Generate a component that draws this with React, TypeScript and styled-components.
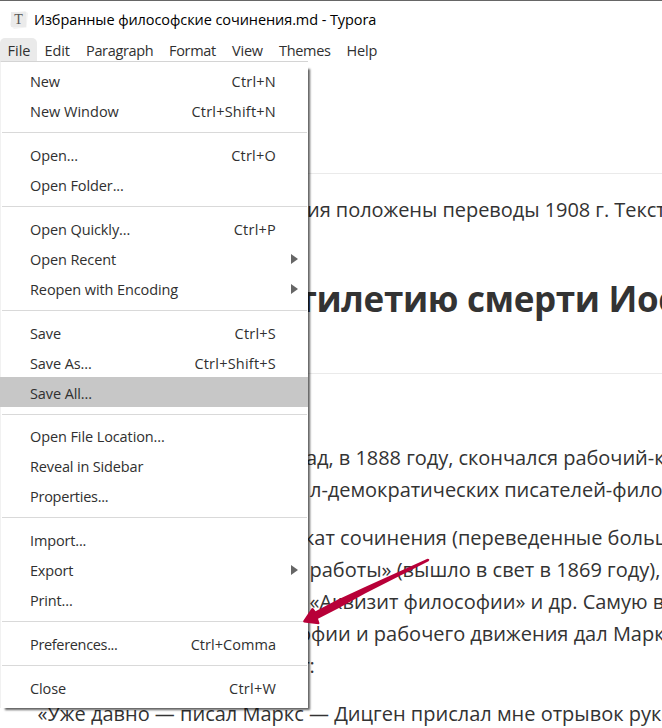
import React from 'react';
import styled, { createGlobalStyle } from 'styled-components';

const GlobalStyle = createGlobalStyle`
  *, *::before, *::after { box-sizing: border-box; }
  body { margin: 0; background: #fff; overflow: hidden; }
`;

const Window = styled.div`
  position: relative;
  width: 662px;
  height: 728px;
  overflow: hidden;
  background: #fff;
  border-top: 1px solid #666;
  font-family: 'Open Sans', 'Noto Sans', sans-serif;
  color: #333;
`;

const TitleBar = styled.header`
  display: flex;
  align-items: center;
  height: 37px;
  padding-left: 9px;
  gap: 5px;
`;

const AppIcon = styled.svg`
  width: 20px;
  height: 20px;
  font: 14px 'Liberation Serif', serif;
`;

const Title = styled.h1`
  margin: 0;
  font-size: 14.5px;
  font-weight: 400;
  line-height: 20px;
  letter-spacing: -0.08px;
  color: #000;
  white-space: nowrap;
`;

const MenuBar = styled.nav`
  display: flex;
  height: 23px;
`;

const MenuTitle = styled.div<{ $width: number; $open?: boolean; $tracking?: number }>`
  width: ${(p) => p.$width}px;
  padding: 1px 0 0 7.5px;
  border-radius: 5px 5px 0 0;
  background: ${(p) => (p.$open ? '#eaeaea' : 'transparent')};
  font-size: 14.5px;
  line-height: 23px;
  letter-spacing: ${(p) => p.$tracking ?? 0}px;
  color: #303030;
  white-space: nowrap;
`;

const Dropdown = styled.div`
  position: absolute;
  top: 60px;
  left: 0;
  width: 308px;
  height: 647px;
  padding-top: 3px;
  background: #fff;
  border-top: 1px solid #d4d4d4;
  border-left: 1px solid #f1f1f1;
`;

const Shadow = styled.div`
  position: absolute;
  top: 68px;
  left: 5px;
  width: 303px;
  height: 639px;
  box-shadow: 1px 1px 2px 1px rgba(0, 0, 0, 0.62);
`;

const MenuRow = styled.div<{ $active?: boolean }>`
  display: flex;
  align-items: center;
  height: 30px;
  margin-left: -1px;
  padding: 3px 32px 0 30px;
  background: ${(p) => (p.$active ? '#c7c7c7' : 'transparent')};
  font-size: 14.5px;
  line-height: 20px;
  color: #303030;
  white-space: nowrap;
`;

const Label = styled.span<{ $tracking: number }>`
  flex: 1;
  letter-spacing: ${(p) => p.$tracking}px;
`;

const Shortcut = styled.span<{ $tracking: number }>`
  letter-spacing: ${(p) => p.$tracking}px;
`;

const SubmenuArrow = styled.svg`
  width: 7px;
  height: 10px;
  margin: -2px -22px 0 0;
  fill: #666;
`;

const Separator = styled.hr<{ $below?: number }>`
  height: 1px;
  margin: 7px 1px ${(p) => p.$below ?? 6}px;
  border: 0;
  background: #d9d9d9;
`;

const Document = styled.main`
  padding-top: 112px;
`;

const Rule = styled.hr`
  height: 1px;
  margin: 0;
  border: 0;
  background: #eaeaea;
`;

const Heading = styled.h2`
  margin: 52px 0 53px;
  padding-left: 297.5px;
  font-size: 35px;
  font-weight: 700;
  line-height: 42px;
  letter-spacing: -0.35px;
  white-space: nowrap;
`;

const Paragraph = styled.div<{ $top: number }>`
  margin-top: ${(p) => p.$top}px;
`;

const Line = styled.div<{ $start: number; $tracking?: number }>`
  height: 32px;
  padding-left: ${(p) => p.$start}px;
  font-size: 20px;
  line-height: 32px;
  letter-spacing: ${(p) => p.$tracking ?? 0}px;
  white-space: nowrap;
`;

const Pointer = styled.svg`
  position: absolute;
  top: 554px;
  left: 298px;
  width: 136px;
  height: 76px;
  fill: #b80038;
`;

type Item = {
  label: string;
  tracking?: number;
  keys?: string;
  keyTracking?: number;
  submenu?: boolean;
  active?: boolean;
};

const groups: Item[][] = [
  [
    { label: 'New', keys: 'Ctrl+N' },
    { label: 'New Window', tracking: 0, keys: 'Ctrl+Shift+N' },
  ],
  [
    { label: 'Open...', keys: 'Ctrl+O' },
    { label: 'Open Folder...' },
  ],
  [
    { label: 'Open Quickly...', keys: 'Ctrl+P' },
    { label: 'Open Recent', submenu: true },
    { label: 'Reopen with Encoding', submenu: true },
  ],
  [
    { label: 'Save', keys: 'Ctrl+S' },
    { label: 'Save As...', keys: 'Ctrl+Shift+S' },
    { label: 'Save All...', active: true },
  ],
  [
    { label: 'Open File Location...' },
    { label: 'Reveal in Sidebar', tracking: -0.15 },
    { label: 'Properties...', tracking: -0.25 },
  ],
  [
    { label: 'Import...', tracking: -0.15 },
    { label: 'Export', tracking: -0.2, submenu: true },
    { label: 'Print...', tracking: -0.15 },
  ],
  [{ label: 'Preferences...', tracking: -0.33, keys: 'Ctrl+Comma', keyTracking: 0.04 }],
  [{ label: 'Close', keys: 'Ctrl+W' }],
];

export default function App() {
  return (
    <>
      <GlobalStyle />
      <Window>
        <TitleBar>
          <AppIcon viewBox="0 0 20 20">
            <path d="M3 2.5 16 1l3 2-1.5 14.5L5 19 1 15z" fill="#f3f3f3" />
            <path d="M2 2h15v15H2z" fill="#ebebeb" />
            <text x="9.5" y="14" textAnchor="middle" fill="#555">T</text>
          </AppIcon>
          <Title>Избранные философские сочинения.md - Typora</Title>
        </TitleBar>
        <MenuBar>
          <MenuTitle $width={37} $open>File</MenuTitle>
          <MenuTitle $width={41.5} $tracking={-0.1}>Edit</MenuTitle>
          <MenuTitle $width={83} $tracking={-0.33}>Paragraph</MenuTitle>
          <MenuTitle $width={63} $tracking={-0.3}>Format</MenuTitle>
          <MenuTitle $width={47} $tracking={-0.2}>View</MenuTitle>
          <MenuTitle $width={67.5} $tracking={-0.3}>Themes</MenuTitle>
          <MenuTitle $width={50} $tracking={-0.2}>Help</MenuTitle>
        </MenuBar>
        <Document>
          <Rule />
          <Paragraph $top={20}>
            <Line $start={307} $tracking={-0.05}>ия положены переводы 1908 г. Текст</Line>
          </Paragraph>
          <Heading>тилетию смерти Иосифа</Heading>
          <Rule />
          <Paragraph $top={68}>
            <Line $start={306} $tracking={-0.04}>ад, в 1888 году, скончался рабочий-к</Line>
            <Line $start={310} $tracking={-0.03}>л-демократических писателей-фило</Line>
          </Paragraph>
          <Paragraph $top={16}>
            <Line $start={304}>кат сочинения (переведенные больш</Line>
            <Line $start={309.5}>работы» (вышло в свет в 1869 году),</Line>
            <Line $start={309.5}>«Аквизит философии» и др. Самую в</Line>
            <Line $start={299}>офии и рабочего движения дал Марк</Line>
            <Line $start={301}>г:</Line>
          </Paragraph>
          <Paragraph $top={16}>
            <Line $start={37.5}>«Уже давно — писал Маркс — Дицген прислал мне отрывок руко</Line>
          </Paragraph>
        </Document>
        <Shadow />
        <Dropdown>
          {groups.map((items, index) => (
            <React.Fragment key={items[0].label}>
              {index > 0 && <Separator $below={index === 4 ? 5 : 6} />}
              {items.map((item) => (
                <MenuRow key={item.label} $active={item.active}>
                  <Label $tracking={item.tracking ?? -0.1}>{item.label}</Label>
                  {item.keys && <Shortcut $tracking={item.keyTracking ?? 0.22}>{item.keys}</Shortcut>}
                  {item.submenu && (
                    <SubmenuArrow viewBox="0 0 7 10">
                      <path d="M0 0 7 5 0 10z" />
                    </SubmenuArrow>
                  )}
                </MenuRow>
              ))}
            </React.Fragment>
          ))}
        </Dropdown>
        <Pointer viewBox="298 555 136 76">
          <path d="M303.3 620.8Q302.6 622 304 622.5L318.5 624.2Q320 624 319.3 622.5L318 618.8 338 608.5 365 593.5 428.5 561.3Q430.5 559 427.5 558.8L365 587 338 599.5 315.5 611.3 313.5 608.5Q312.3 607.5 311.3 608.8Z" />
        </Pointer>
      </Window>
    </>
  );
}
